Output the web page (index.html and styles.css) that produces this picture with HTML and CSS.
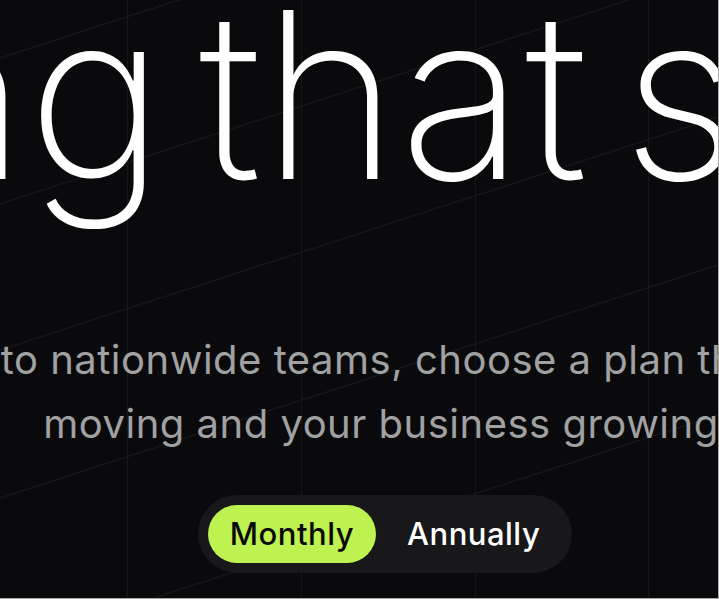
FILE: index.html
```html
<!DOCTYPE html>
<html lang="en">
<head>
<meta charset="utf-8">
<title>Pricing</title>
<link rel="stylesheet" href="styles.css">
</head>
<body>
<section class="hero">
  <svg class="bg" width="718" height="598" viewBox="0 0 718 598" aria-hidden="true">
    <g class="vlines">
      <line x1="127.5" y1="0" x2="127.5" y2="598"/>
      <line x1="301.5" y1="0" x2="301.5" y2="598"/>
      <line x1="475.5" y1="0" x2="475.5" y2="598"/>
      <line x1="648.5" y1="0" x2="648.5" y2="598"/>
    </g>
    <g class="dlines">
      <line x1="0" y1="58" x2="718" y2="-175"/>
      <line x1="0" y1="204" x2="718" y2="-29"/>
      <line x1="0" y1="350" x2="718" y2="117"/>
      <line x1="0" y1="498" x2="718" y2="265"/>
      <line x1="0" y1="648" x2="718" y2="415"/>
    </g>
  </svg>
  <div class="content">
    <h1 class="title">Pricing that scales</h1>
    <p class="lead">From solo traders to nationwide teams, choose a plan that keeps your crews<br>moving and your business growing.</p>
    <div class="toggle" role="tablist">
      <button class="opt active" type="button">Monthly</button>
      <button class="opt" type="button">Annually</button>
    </div>
  </div>
</section>
</body>
</html>
```
FILE: styles.css
```css
html, body {
  margin: 0;
  padding: 0;
}
body {
  background: #a8a8a8;
  font-family: "Inter", "Noto Sans", sans-serif;
}
.hero {
  position: relative;
  width: 718px;
  height: 598px;
  background: #0a0a0c;
  overflow: hidden;
}
.bg {
  position: absolute;
  left: 0;
  top: 0;
}
.vlines line {
  stroke: #17171a;
  stroke-width: 1;
}
.dlines line {
  stroke: #1c1c1f;
  stroke-width: 1;
}
.content {
  position: relative;
  width: 1400px;
  margin-left: -315px;
  padding-top: 2px;
  display: flex;
  flex-direction: column;
  align-items: center;
}
.title {
  margin: 0 0 0 -38px;
  font-weight: 200;
  font-size: 232px;
  line-height: 0.8;
  color: #ffffff;
  white-space: nowrap;
  letter-spacing: 1px;
  word-spacing: -33px;
}
.lead {
  margin: 140px 0 0 4px;
  font-size: 40px;
  line-height: 64px;
  font-weight: 400;
  letter-spacing: 0.5px;
  color: #a1a1a3;
  text-align: center;
  white-space: nowrap;
}
.toggle {
  margin-top: 39px;
  display: flex;
  gap: 9px;
  padding: 10px;
  background: #18181a;
  border-radius: 999px;
}
.opt {
  height: 58px;
  padding: 0 22px;
  border: 0;
  border-radius: 999px;
  background: transparent;
  color: #ffffff;
  font-family: "Inter", "Noto Sans", sans-serif;
  font-size: 31px;
  font-weight: 500;
  letter-spacing: 0.5px;
  cursor: pointer;
}
.opt.active {
  background: #bef250;
  color: #0a0a0a;
}
```
